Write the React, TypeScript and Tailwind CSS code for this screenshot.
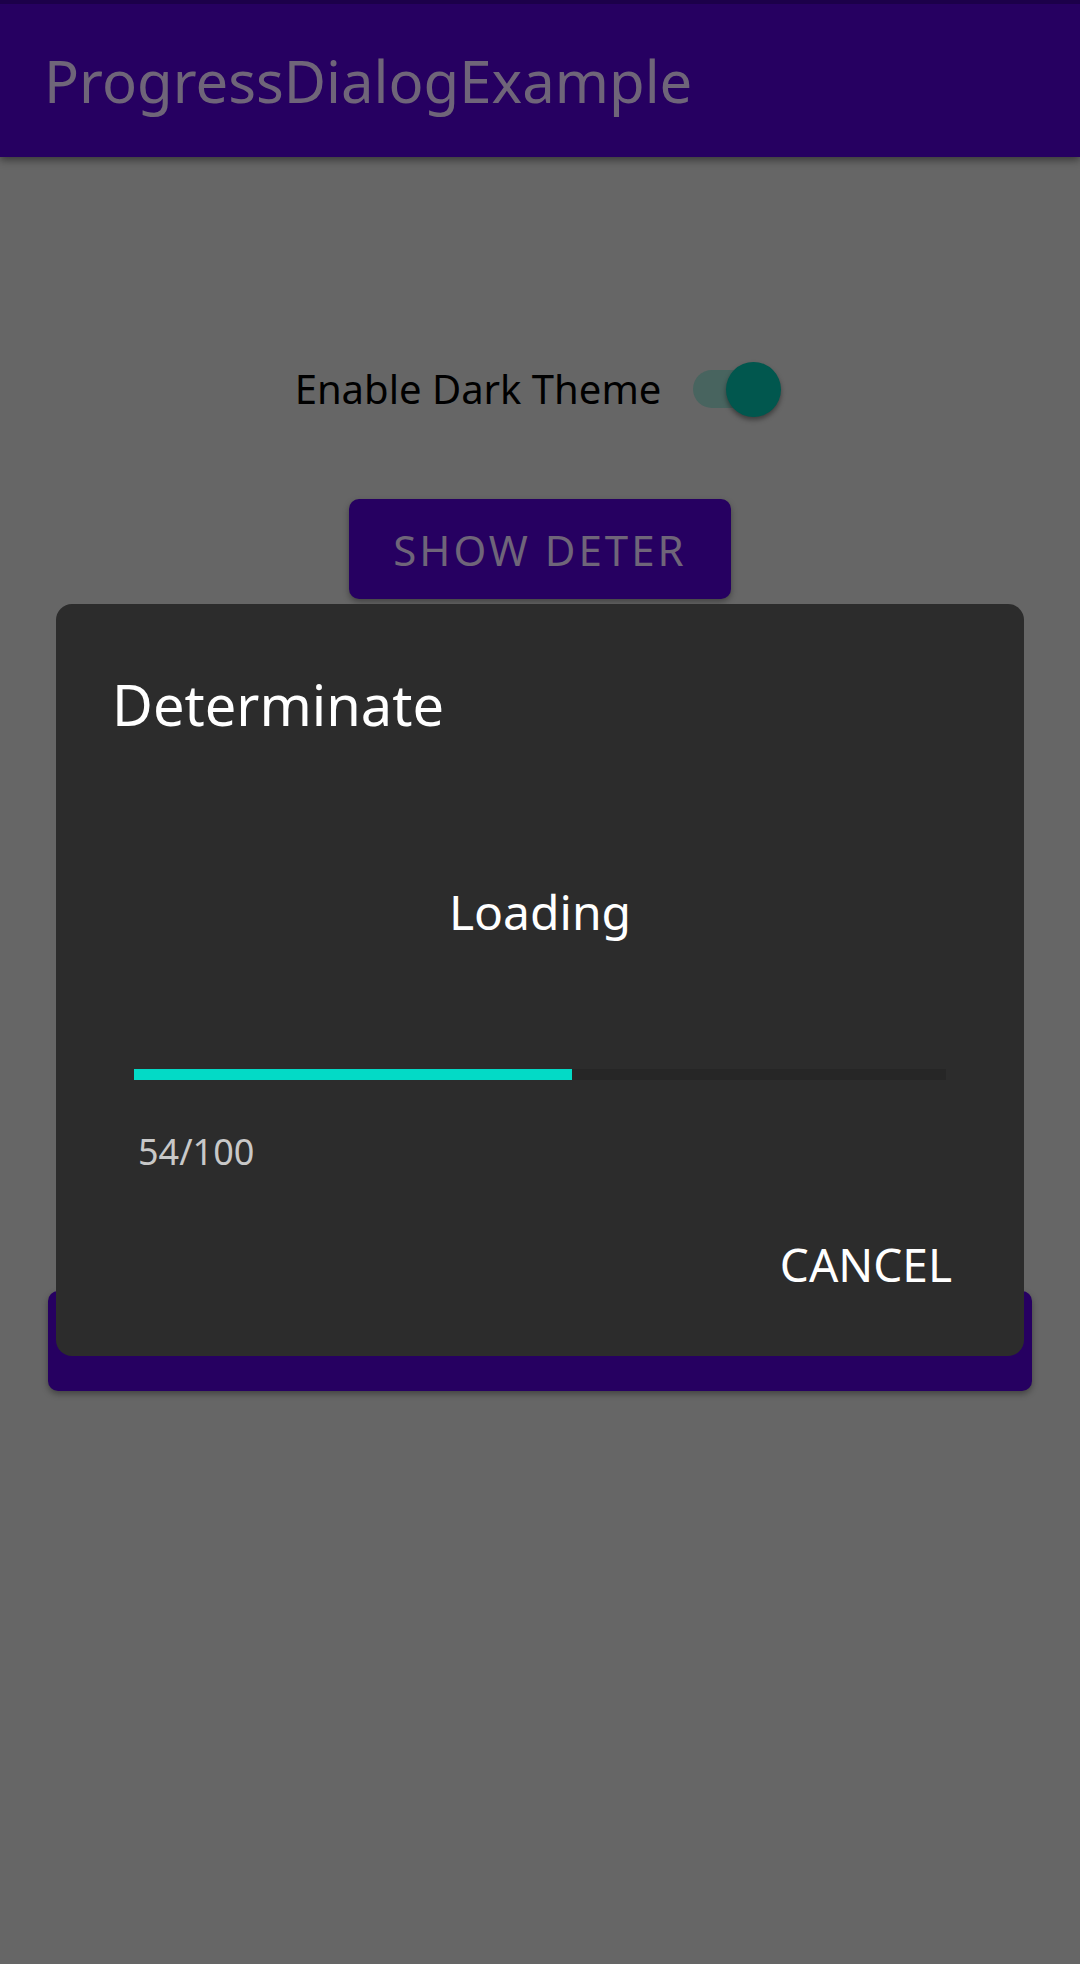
export default function App() {
  return (
    <div className="relative min-h-screen bg-[#666666] font-['Noto_Sans',sans-serif]">
      <header className="flex h-[157px] items-center border-t-4 border-[#1c004a] bg-[#260061] px-11 shadow-[0_3px_8px_rgba(0,0,0,0.45)]">
        <h1 className="text-[58px] leading-[72px] text-[#6f6579]">ProgressDialogExample</h1>
      </header>
      <main className="flex flex-col items-center px-12">
        <label className="mt-[200px] mr-1 flex h-16 items-center gap-8 text-[40px] leading-[56px] text-black">
          <span>Enable Dark Theme</span>
          <span className="relative flex h-14 w-[88px] items-center">
            <input type="checkbox" role="switch" defaultChecked className="h-[38px] w-[74px] appearance-none rounded-full bg-[#48645f]" />
            <span className="pointer-events-none absolute right-0 size-[55px] rounded-full bg-[#01574e] shadow-[0_3px_5px_rgba(0,0,0,0.4)]" />
          </span>
        </label>
        <button className="mt-[78px] h-[100px] w-[382px] rounded-[10px] bg-[#260061] text-[42px] tracking-[3px] text-[#6f6579] shadow-[0_3px_6px_rgba(0,0,0,0.35)]">SHOW DETER</button>
        <button aria-label="Show indeterminate" className="mt-[692px] h-[100px] w-full rounded-[10px] bg-[#260061] shadow-[0_3px_6px_rgba(0,0,0,0.35)]" />
      </main>
      <div className="absolute inset-x-14 top-[604px]">
        <section role="dialog" aria-labelledby="dialog-title" className="flex flex-col rounded-2xl bg-[#2c2c2c] px-14 pt-16 pb-[60px] text-white">
          <h2 id="dialog-title" className="text-[56px] leading-[72px]">Determinate</h2>
          <p className="mt-[140px] text-center text-[48px] leading-[64px]">Loading</p>
          <div role="progressbar" aria-label="Loading" aria-valuenow={54} aria-valuemin={0} aria-valuemax={100} className="mx-[22px] mt-[125px] h-[11px] bg-[#262626]">
            <div className="h-full bg-[#03dac6]" style={{ width: "54%" }} />
          </div>
          <p className="mx-[26px] mt-12 text-[36px] leading-[48px] text-[#c8c8c8]">54/100</p>
          <button className="mt-14 mr-4 self-end text-[46px] leading-[64px]">CANCEL</button>
        </section>
      </div>
    </div>
  );
}
